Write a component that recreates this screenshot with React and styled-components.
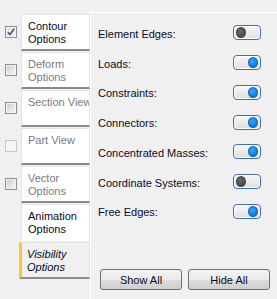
import React, { Fragment } from "react";
import styled, { createGlobalStyle } from "styled-components";

const GlobalStyle = createGlobalStyle`
  html, body {
    margin: 0;
    padding: 0;
    background: #f0f0f0;
  }
  body {
    font-family: "Liberation Sans", Arial, sans-serif;
    font-size: 11px;
  }
`;

const TABS = [
  { lines: ["Contour", "Options"], check: "checked", enabled: true },
  { lines: ["Deform", "Options"], check: "unchecked" },
  { lines: ["Section View"], check: "unchecked" },
  { lines: ["Part View"], check: "disabled" },
  { lines: ["Vector", "Options"], check: "unchecked" },
  { lines: ["Animation", "Options"], enabled: true, flat: true },
  { lines: ["Visibility", "Options"], enabled: true, active: true },
];

const ITEMS = [
  { label: "Element Edges:", on: false },
  { label: "Loads:", on: true },
  { label: "Constraints:", on: true },
  { label: "Connectors:", on: true },
  { label: "Concentrated Masses:", on: true },
  { label: "Coordinate Systems:", on: false },
  { label: "Free Edges:", on: true },
];

function CheckBox({ state }) {
  if (!state) return <CheckSlot />;
  return (
    <CheckSlot>
      <StyledCheck $state={state}>
        {state === "checked" && (
          <svg width="8" height="8" viewBox="0 0 8 8">
            <path
              d="M0.8 4.2 L3 6.6 L7.2 0.8"
              fill="none"
              stroke="#3d4f8f"
              strokeWidth="1.6"
            />
          </svg>
        )}
      </StyledCheck>
    </CheckSlot>
  );
}

function Toggle({ on }) {
  return (
    <StyledToggle $on={on}>
      <Knob $on={on} />
    </StyledToggle>
  );
}

export default function App() {
  return (
    <Fragment>
      <GlobalStyle />
      <Window>
        <Sidebar>
          {TABS.map((tab) => (
            <TabRow key={tab.lines.join(" ")}>
              <CheckBox state={tab.check} />
              <Tab
                $enabled={tab.enabled}
                $active={tab.active}
                $flat={tab.flat}
              >
                {tab.lines.map((line) => (
                  <div key={line}>{line}</div>
                ))}
              </Tab>
            </TabRow>
          ))}
        </Sidebar>
        <Panel>
          <List>
            {ITEMS.map((item) => (
              <Row key={item.label}>
                <span>{item.label}</span>
                <Toggle on={item.on} />
              </Row>
            ))}
          </List>
          <Buttons>
            <Button type="button">Show All</Button>
            <Button type="button">Hide All</Button>
          </Buttons>
        </Panel>
      </Window>
    </Fragment>
  );
}

const Window = styled.div`
  width: 277px;
  height: 299px;
  display: flex;
  background: #f0f0f0;
  overflow: hidden;
`;

const Sidebar = styled.div`
  width: 90px;
  flex: none;
  padding-top: 14px;
  display: flex;
  flex-direction: column;
`;

const TabRow = styled.div`
  height: 38px;
  display: flex;
  align-items: stretch;
`;

const CheckSlot = styled.div`
  width: 19px;
  flex: none;
  display: flex;
  align-items: center;
  padding-left: 5px;
  padding-bottom: 2px;
  box-sizing: border-box;
`;

const StyledCheck = styled.span`
  width: 12px;
  height: 12px;
  box-sizing: border-box;
  display: flex;
  align-items: center;
  justify-content: center;
  border: 1px solid ${(p) => (p.$state === "disabled" ? "#c8c8c8" : "#8e8f8f")};
  box-shadow: inset 0 0 0 1px #f4f4f4;
  background: ${(p) =>
    p.$state === "disabled"
      ? "#f6f6f6"
      : p.$state === "checked"
      ? "linear-gradient(135deg, #dcdfe8 0%, #f4f4f8 100%)"
      : "linear-gradient(135deg, #c9c9c9 0%, #e8e8e8 60%, #f6f6f6 100%)"};
`;

const Tab = styled.div`
  flex: 1;
  margin-left: ${(p) => (p.$active ? "0" : "2px")};
  height: 37px;
  box-sizing: border-box;
  padding: 5px 0 0 ${(p) => (p.$active ? "5px" : "6px")};
  background: ${(p) => (p.$active ? "#f0f0f0" : "#ffffff")};
  border: 1px solid #e3e3e3;
  border-left: ${(p) => (p.$active ? "3px solid #fbc43b" : "1px solid #e3e3e3")};
  border-bottom: ${(p) =>
    p.$flat ? "1px solid #ffffff" : "2px solid #8a8a8a"};
  color: ${(p) => (p.$enabled ? "#0a0a1e" : "#7a7a7a")};
  font-style: ${(p) => (p.$active ? "italic" : "normal")};
  line-height: 13px;
  white-space: nowrap;
  overflow: hidden;
`;

const Panel = styled.div`
  flex: 1;
  margin-top: 12px;
  border-top: 1px solid #ffffff;
  border-left: 1px solid #ffffff;
  display: flex;
  flex-direction: column;
  padding: 5px 8px 9px 7px;
`;

const List = styled.div`
  display: grid;
  grid-auto-rows: 29.75px;
`;

const Row = styled.div`
  display: flex;
  align-items: center;
  justify-content: space-between;
  padding-right: 9px;
  color: #0a0a1e;
  line-height: 13px;
  span {
    padding-top: 3px;
  }
`;

const StyledToggle = styled.div`
  width: 28px;
  height: 15px;
  box-sizing: border-box;
  border: 1px solid #3c6fb8;
  border-radius: 4px;
  background: linear-gradient(#f6f6f6 0%, #ececec 50%, #dedede 100%);
  box-shadow: inset 0 0 0 1px #ffffff;
  display: flex;
  align-items: center;
  justify-content: ${(p) => (p.$on ? "flex-end" : "flex-start")};
  padding: 0 2px;
`;

const Knob = styled.span`
  width: 10px;
  height: 11px;
  border-radius: 50%;
  box-sizing: border-box;
  background: ${(p) =>
    p.$on
      ? "radial-gradient(circle at 40% 35%, #3aa8ff, #0080f0 70%)"
      : "radial-gradient(circle at 40% 35%, #6a6a6a, #4a4a4a 70%)"};
  border: 1px solid ${(p) => (p.$on ? "#1a5fb0" : "#444")};
`;

const Buttons = styled.div`
  margin-top: auto;
  display: flex;
  gap: 6px;
  padding-left: 2px;
`;

const Button = styled.button`
  width: 82px;
  height: 21px;
  box-sizing: border-box;
  border: 1px solid #707070;
  border-radius: 3px;
  background: linear-gradient(#f2f2f2 0%, #ebebeb 50%, #dddddd 51%, #cfcfcf 100%);
  font-family: "Liberation Sans", Arial, sans-serif;
  font-size: 11px;
  color: #0a0a1e;
  padding: 0;
`;
